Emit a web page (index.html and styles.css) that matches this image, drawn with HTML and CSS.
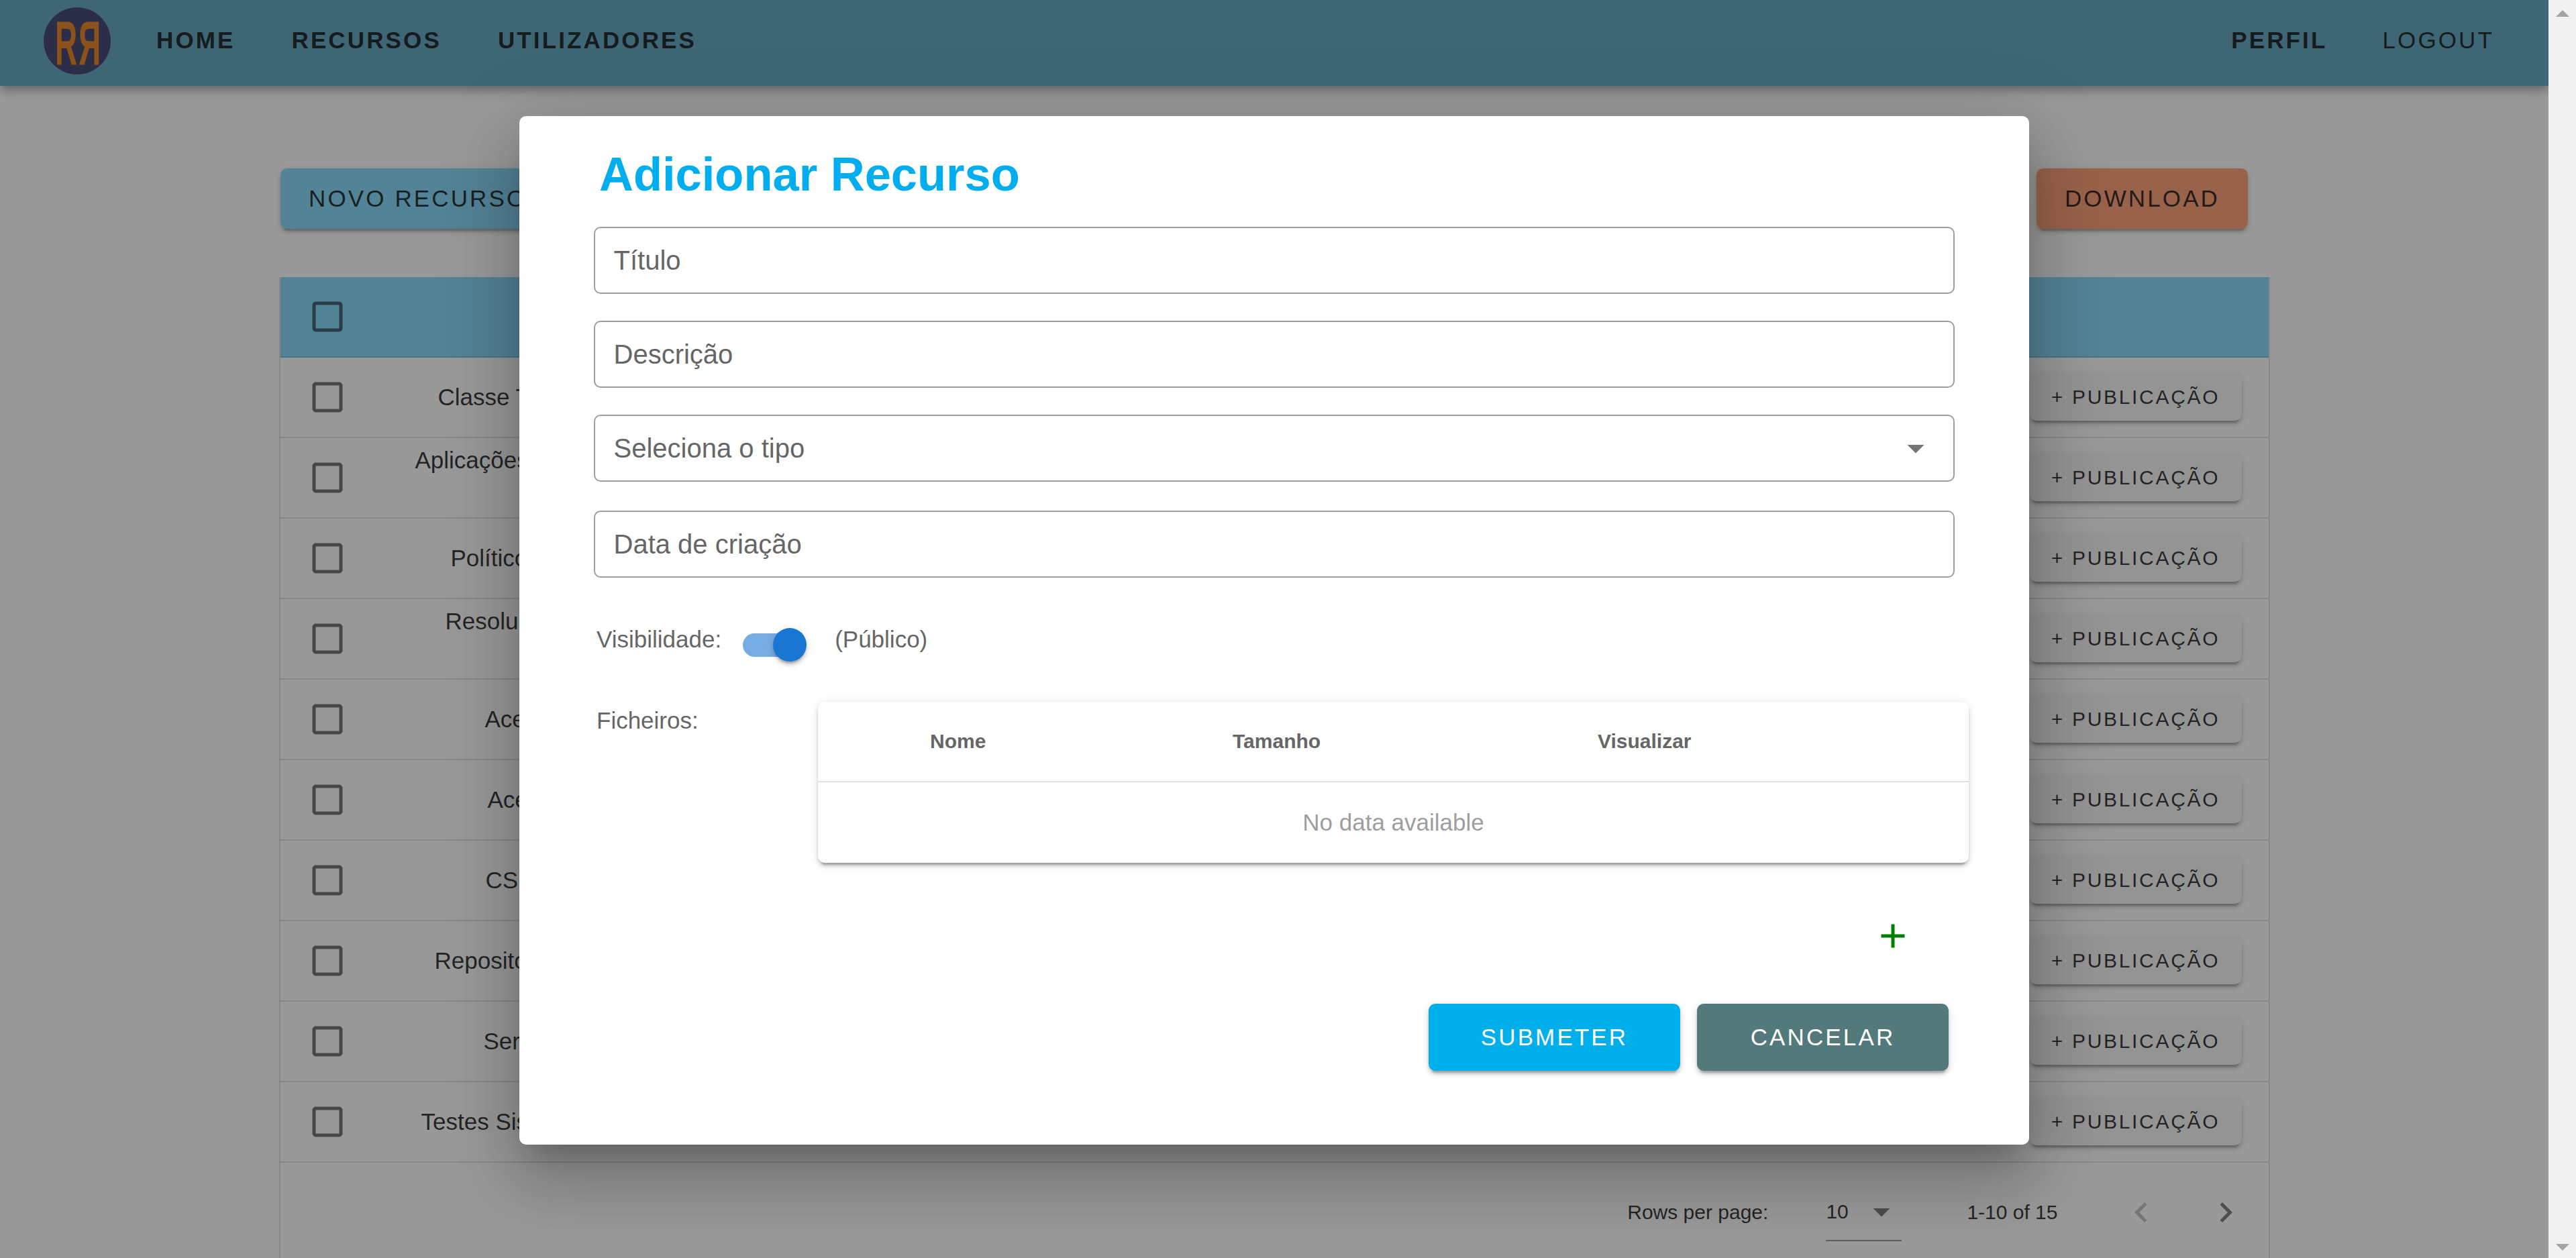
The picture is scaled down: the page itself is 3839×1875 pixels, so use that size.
FILE: index.html
```html
<!DOCTYPE html>
<html lang="pt">
<head>
  <meta charset="UTF-8">
  <title>Recursos</title>
  <link rel="stylesheet" href="styles.css">
</head>
<body>
  <div class="page">
    <header class="topbar">
      <svg class="logo" viewBox="0 0 100 100">
        <circle cx="50" cy="50" r="50" class="logo-bg"/>
        <text class="logo-r" transform="translate(17 84.5) scale(.5 1)">R</text>
        <text class="logo-r" transform="translate(85 84.5) scale(-.5 1)">R</text>
      </svg>
      <nav class="nav">
        <a>HOME</a>
        <a>RECURSOS</a>
        <a>UTILIZADORES</a>
      </nav>
      <nav class="nav nav-right">
        <a>PERFIL</a>
        <a class="plain">LOGOUT</a>
      </nav>
    </header>

    <main class="content">
      <div class="toolbar">
        <button class="btn btn-blue">NOVO RECURSO</button>
        <button class="btn btn-orange">DOWNLOAD</button>
      </div>

      <div class="res-table">
        <div class="row row-head">
          <svg class="check" viewBox="0 0 24 24"><path d="M19,3H5C3.89,3 3,3.89 3,5V19A2,2 0 0,0 5,21H19A2,2 0 0,0 21,19V5C21,3.89 20.1,3 19,3M19,5V19H5V5H19Z"/></svg>
        </div>
        <div class="row">
          <svg class="check" viewBox="0 0 24 24"><path d="M19,3H5C3.89,3 3,3.89 3,5V19A2,2 0 0,0 5,21H19A2,2 0 0,0 21,19V5C21,3.89 20.1,3 19,3M19,5V19H5V5H19Z"/></svg>
          <span class="name n-classe">Classe T</span>
          <button class="btn-pub">+ PUBLICAÇÃO</button>
        </div>
        <div class="row">
          <svg class="check" viewBox="0 0 24 24"><path d="M19,3H5C3.89,3 3,3.89 3,5V19A2,2 0 0,0 5,21H19A2,2 0 0,0 21,19V5C21,3.89 20.1,3 19,3M19,5V19H5V5H19Z"/></svg>
          <span class="name name-wrap n-aplic">Aplicações</span>
          <button class="btn-pub">+ PUBLICAÇÃO</button>
        </div>
        <div class="row">
          <svg class="check" viewBox="0 0 24 24"><path d="M19,3H5C3.89,3 3,3.89 3,5V19A2,2 0 0,0 5,21H19A2,2 0 0,0 21,19V5C21,3.89 20.1,3 19,3M19,5V19H5V5H19Z"/></svg>
          <span class="name n-polit">Político</span>
          <button class="btn-pub">+ PUBLICAÇÃO</button>
        </div>
        <div class="row">
          <svg class="check" viewBox="0 0 24 24"><path d="M19,3H5C3.89,3 3,3.89 3,5V19A2,2 0 0,0 5,21H19A2,2 0 0,0 21,19V5C21,3.89 20.1,3 19,3M19,5V19H5V5H19Z"/></svg>
          <span class="name name-wrap n-resol">Resolu</span>
          <button class="btn-pub">+ PUBLICAÇÃO</button>
        </div>
        <div class="row">
          <svg class="check" viewBox="0 0 24 24"><path d="M19,3H5C3.89,3 3,3.89 3,5V19A2,2 0 0,0 5,21H19A2,2 0 0,0 21,19V5C21,3.89 20.1,3 19,3M19,5V19H5V5H19Z"/></svg>
          <span class="name n-ace1">Ace</span>
          <button class="btn-pub">+ PUBLICAÇÃO</button>
        </div>
        <div class="row">
          <svg class="check" viewBox="0 0 24 24"><path d="M19,3H5C3.89,3 3,3.89 3,5V19A2,2 0 0,0 5,21H19A2,2 0 0,0 21,19V5C21,3.89 20.1,3 19,3M19,5V19H5V5H19Z"/></svg>
          <span class="name n-ace2">Ace</span>
          <button class="btn-pub">+ PUBLICAÇÃO</button>
        </div>
        <div class="row">
          <svg class="check" viewBox="0 0 24 24"><path d="M19,3H5C3.89,3 3,3.89 3,5V19A2,2 0 0,0 5,21H19A2,2 0 0,0 21,19V5C21,3.89 20.1,3 19,3M19,5V19H5V5H19Z"/></svg>
          <span class="name n-cs">CS</span>
          <button class="btn-pub">+ PUBLICAÇÃO</button>
        </div>
        <div class="row">
          <svg class="check" viewBox="0 0 24 24"><path d="M19,3H5C3.89,3 3,3.89 3,5V19A2,2 0 0,0 5,21H19A2,2 0 0,0 21,19V5C21,3.89 20.1,3 19,3M19,5V19H5V5H19Z"/></svg>
          <span class="name n-repo">Reposito</span>
          <button class="btn-pub">+ PUBLICAÇÃO</button>
        </div>
        <div class="row">
          <svg class="check" viewBox="0 0 24 24"><path d="M19,3H5C3.89,3 3,3.89 3,5V19A2,2 0 0,0 5,21H19A2,2 0 0,0 21,19V5C21,3.89 20.1,3 19,3M19,5V19H5V5H19Z"/></svg>
          <span class="name n-ser">Ser</span>
          <button class="btn-pub">+ PUBLICAÇÃO</button>
        </div>
        <div class="row">
          <svg class="check" viewBox="0 0 24 24"><path d="M19,3H5C3.89,3 3,3.89 3,5V19A2,2 0 0,0 5,21H19A2,2 0 0,0 21,19V5C21,3.89 20.1,3 19,3M19,5V19H5V5H19Z"/></svg>
          <span class="name n-testes">Testes Sis</span>
          <button class="btn-pub">+ PUBLICAÇÃO</button>
        </div>
        <div class="pager">
          <span class="pager-label">Rows per page:</span>
          <span class="pager-select">
            <span>10</span>
            <svg class="icon" viewBox="0 0 24 24"><path d="M7,10L12,15L17,10H7Z"/></svg>
          </span>
          <span class="pager-range">1-10 of 15</span>
          <svg class="icon icon-off" viewBox="0 0 24 24"><path d="M15.41,16.58L10.83,12L15.41,7.41L14,6L8,12L14,18L15.41,16.58Z"/></svg>
          <svg class="icon icon-next" viewBox="0 0 24 24"><path d="M8.59,16.58L13.17,12L8.59,7.41L10,6L16,12L10,18L8.59,16.58Z"/></svg>
        </div>
      </div>
    </main>

    <div class="overlay">
      <div class="dialog">
        <h2 class="dialog-title">Adicionar Recurso</h2>
        <form class="form">
          <div class="field">Título</div>
          <div class="field">Descrição</div>
          <div class="field field-select">
            <span>Seleciona o tipo</span>
            <svg class="icon" viewBox="0 0 24 24"><path d="M7,10L12,15L17,10H7Z"/></svg>
          </div>
          <div class="field field-date">Data de criação</div>

          <div class="visibility">
            <span>Visibilidade:</span>
            <span class="switch"><span class="switch-thumb"></span></span>
            <span>(Público)</span>
          </div>

          <div class="files">
            <span class="files-label">Ficheiros:</span>
            <div class="files-table">
              <div class="files-head">
                <span>Nome</span>
                <span>Tamanho</span>
                <span>Visualizar</span>
              </div>
              <div class="files-empty">No data available</div>
            </div>
          </div>

          <div class="add-row">
            <svg class="icon-add" viewBox="0 0 24 24"><path d="M19,13H13V19H11V13H5V11H11V5H13V11H19V13Z"/></svg>
          </div>

          <div class="actions">
            <button type="button" class="action action-submit">SUBMETER</button>
            <button type="button" class="action action-cancel">CANCELAR</button>
          </div>
        </form>
      </div>
    </div>
  </div>

  <div class="scrollbar">
    <span class="arrow-up"></span>
    <span class="arrow-down"></span>
  </div>
</body>
</html>
```

FILE: styles.css
```css
html, body { margin:0; height:100%; overflow:hidden; }
body { display:flex; font-family:"Liberation Sans",Arial,sans-serif; color:rgba(0,0,0,.87); background:#fff; }
button { font-family:inherit; border:none; cursor:pointer; }

.page { position:relative; flex:1; height:1875px; overflow:hidden; background:#fff; }

/* top bar */
.topbar { display:flex; align-items:center; height:128px; padding:0 81px 0 65px; background:#57a1bd; box-shadow:0 5px 10px -2.5px rgba(0,0,0,.2), 0 10px 12px 0 rgba(0,0,0,.14), 0 2.5px 25px 0 rgba(0,0,0,.12); position:relative; }
.logo { width:100px; height:100px; margin-top:-7px; overflow:visible; }
.logo-bg { fill:#363966; }
.logo-r { font-size:92px; font-weight:700; fill:#e77c18; }
.nav { display:flex; gap:84px; margin-left:68px; font-size:35px; font-weight:700; letter-spacing:3.125px; margin-top:-8px; }
.nav-right { margin-left:auto; gap:82px; }
.nav .plain { font-weight:400; }

/* page content */
.content { padding:123px 418px 0; }
.toolbar { display:flex; justify-content:space-between; padding-right:30px; margin-bottom:72px; }
.btn { height:90px; padding:0 42px; border-radius:10px; font-size:35px; letter-spacing:3.125px; color:rgba(0,0,0,.87); box-shadow:0 7.5px 2.5px -5px rgba(0,0,0,.2), 0 5px 5px 0 rgba(0,0,0,.14), 0 2.5px 12.5px 0 rgba(0,0,0,.12); }
.btn-blue { background:#7ed6fa; }
.btn-orange { background:#ff996d; }

.res-table { border:solid rgba(0,0,0,.12); border-width:0 2.5px; margin:0 -2.5px 0 -2.5px; }
.row { display:flex; align-items:center; height:120px; box-sizing:border-box; padding:0 40px; border-bottom:2.5px solid rgba(0,0,0,.12); }
.row-head { background:#7ed6fa; }
.check { width:60px; height:60px; fill:rgba(0,0,0,.6); flex:none; }
.name { font-size:35px; line-height:50px; white-space:nowrap; }
.name-wrap { margin-bottom:52px; }
.n-classe { margin-left:135px; }
.n-aplic { margin-left:101px; }
.n-polit { margin-left:154px; }
.n-resol { margin-left:146px; }
.n-ace1 { margin-left:205px; }
.n-ace2 { margin-left:209px; }
.n-cs { margin-left:206px; }
.n-repo { margin-left:130px; }
.n-ser { margin-left:203px; }
.n-testes { margin-left:110px; }
.btn-pub { margin-left:auto; width:316px; height:70px; padding:0; border-radius:10px; background:#f5f5f5; color:rgba(0,0,0,.87); font-size:30px; letter-spacing:2.68px; white-space:nowrap; box-shadow:0 7.5px 2.5px -5px rgba(0,0,0,.2), 0 5px 5px 0 rgba(0,0,0,.14), 0 2.5px 12.5px 0 rgba(0,0,0,.12); }

.pager { display:flex; align-items:center; height:148px; padding-right:34px; justify-content:flex-end; font-size:30px; }
.pager-select { display:flex; align-items:center; justify-content:space-between; width:113px; height:86px; box-sizing:border-box; margin-left:86px; border-bottom:2.5px solid rgba(0,0,0,.42); }
.pager-range { margin:0 94px 0 97px; }
.icon { width:60px; height:60px; fill:rgba(0,0,0,.54); flex:none; }
.icon-off { fill:rgba(0,0,0,.26); }
.icon-next { margin-left:66px; }

/* modal */
.overlay { position:absolute; inset:0; display:flex; align-items:center; justify-content:center; padding-top:4px; background:rgba(33,33,33,.46); }
.dialog { width:2250px; height:1533px; background:#fff; border-radius:10px; box-shadow:0 27.5px 37.5px -17.5px rgba(0,0,0,.2), 0 60px 95px 7.5px rgba(0,0,0,.14), 0 22.5px 115px 20px rgba(0,0,0,.12); }
.dialog-title { margin:47px 0 38px 119px; font-size:70.5px; line-height:80px; font-weight:700; color:#00aeef; }
.form { padding-left:111px; width:2028px; }
.field { display:flex; align-items:center; justify-content:space-between; height:100px; box-sizing:border-box; padding:0 26.5px 0 27.5px; margin-bottom:40px; border:2.5px solid #9e9e9e; border-radius:10px; font-size:40px; color:#666; }
.field-select { margin-bottom:43px; }
.field-date { margin-bottom:67px; }

.visibility { display:flex; padding-left:4px; font-size:35px; line-height:50px; color:#666; }
.switch { position:relative; width:95px; height:50px; margin:8px 42px 0 32px; }
.switch::before { content:""; position:absolute; left:0; top:7.5px; width:90px; height:35px; border-radius:17.5px; background:#77ade4; }
.switch-thumb { position:absolute; right:0; top:0; width:50px; height:50px; border-radius:50%; background:#1976d2; box-shadow:0 5px 2.5px -2.5px rgba(0,0,0,.2), 0 5px 5px 0 rgba(0,0,0,.14), 0 2.5px 12.5px 0 rgba(0,0,0,.12); }

.files { display:flex; margin-top:60px; }
.files-label { width:334px; margin-top:3px; padding-left:4px; box-sizing:border-box; font-size:35px; line-height:50px; color:#666; flex:none; }
.files-table { width:1715px; height:240px; flex:none; border-radius:10px; background:#fff; box-shadow:0 7.5px 2.5px -5px rgba(0,0,0,.2), 0 5px 5px 0 rgba(0,0,0,.14), 0 2.5px 12.5px 0 rgba(0,0,0,.12); }
.files-head { display:grid; grid-template-columns:451px 544px 1fr; align-items:center; height:120px; box-sizing:border-box; padding-left:167px; border-bottom:2.5px solid #e0e0e0; font-size:30px; font-weight:700; color:#666; }
.files-empty { height:120px; line-height:120px; text-align:center; font-size:35px; color:#9e9e9e; }

.add-row { display:flex; justify-content:flex-end; margin-top:79px; padding-right:62px; }
.icon-add { width:60px; height:60px; fill:#008000; }

.actions { display:flex; justify-content:flex-end; gap:25px; margin-top:71px; padding-right:9px; }
.action { width:375px; height:100px; border-radius:10px; font-size:35px; letter-spacing:3.125px; color:#fff; box-shadow:0 7.5px 2.5px -5px rgba(0,0,0,.2), 0 5px 5px 0 rgba(0,0,0,.14), 0 2.5px 12.5px 0 rgba(0,0,0,.12); }
.action-submit { background:#00aeea; }
.action-cancel { background:#54797a; }

/* browser scrollbar */
.scrollbar { display:flex; flex-direction:column; justify-content:space-between; align-items:center; width:41px; height:1875px; padding:15px 0 11px; box-sizing:border-box; background:#f1f1f1; flex:none; }
.arrow-up { border:solid transparent; border-width:0 10px 10px; border-bottom-color:#a3a3a3; }
.arrow-down { border:solid transparent; border-width:10px 10px 0; border-top-color:#a3a3a3; }
```
